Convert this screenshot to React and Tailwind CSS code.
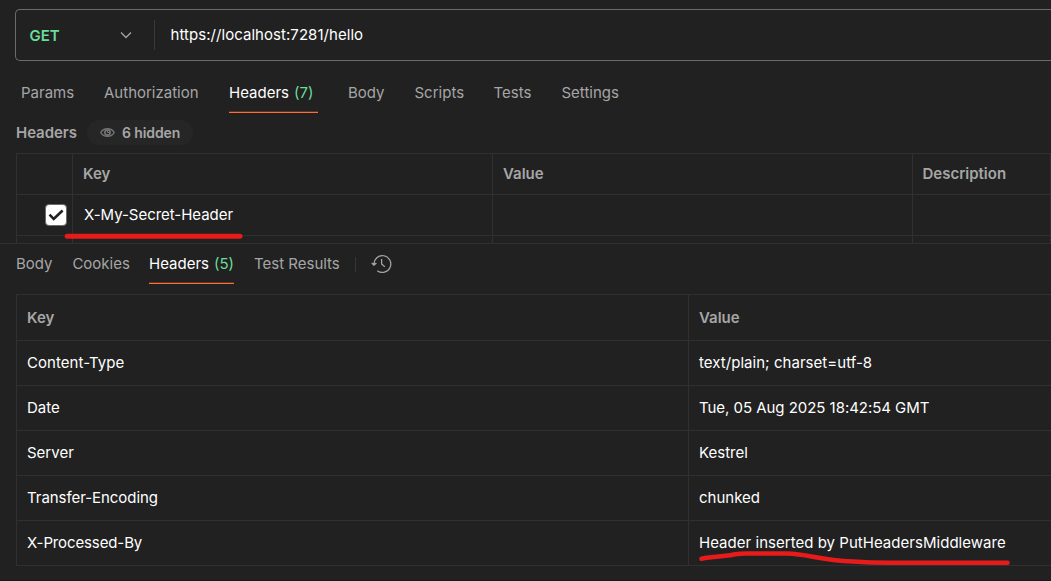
import React from "react";

const requestTabs = [
  { label: "Params", width: "w-[53px]" },
  { label: "Authorization", width: "w-[95px]" },
  { label: "Headers", count: 7, width: "w-[89px]" },
  { label: "Body", width: "w-[36.500px]" },
  { label: "Scripts", width: "w-[49px]" },
  { label: "Tests", width: "w-[38px]" },
  { label: "Settings", width: "w-[59px]" },
];

const responseTabs = [
  { label: "Body", width: "w-[36.400px]" },
  { label: "Cookies", width: "w-[56.600px]" },
  { label: "Headers", count: 5, width: "w-[85px]" },
  { label: "Test Results", width: "w-[87px]" },
];

const responseHeaders = [
  { name: "Content-Type", value: "text/plain; charset=utf-8", nameTracking: "tracking-[0.05px]", valueTracking: "tracking-[0.04px]" },
  { name: "Date", value: "Tue, 05 Aug 2025 18:42:54 GMT", nameTracking: "", valueTracking: "tracking-[-0.04px]" },
  { name: "Server", value: "Kestrel", nameTracking: "", valueTracking: "" },
  { name: "Transfer-Encoding", value: "chunked", nameTracking: "tracking-[-0.05px]", valueTracking: "" },
  { name: "X-Processed-By", value: "Header inserted by PutHeadersMiddleware", nameTracking: "tracking-[-0.12px]", valueTracking: "tracking-[0.03px]", marked: true },
];

function Tab({ label, count, width }) {
  const active = count !== undefined;
  return (
    <button
      className={`flex h-full shrink-0 whitespace-nowrap border-b ${width} ${
        active
          ? "border-[#ff6c37] text-white shadow-[inset_0_-1px_0_#583428]"
          : "border-transparent text-[#a6a6a6]"
      }`}
    >
      {label}
      {active && <span className="ml-[5px] text-[#6bdd9a]">({count})</span>}
    </button>
  );
}

function EyeIcon() {
  return (
    <svg className="h-[11px] w-[15px] shrink-0" viewBox="0 0 15 11" fill="none">
      <path d="M.8 5.500C2.200 2.800 4.600 1.700 7.500 1.700s5.300 1.100 6.700 3.800c-1.400 2.700-3.800 3.800-6.700 3.800S2.200 8.200.8 5.500Z" stroke="#737373" strokeWidth="1.400" />
      <circle cx="7.500" cy="5.500" r="2.600" stroke="#737373" strokeWidth="1.700" />
      <path d="M7.500 3.500v2H9.500" stroke="#737373" />
    </svg>
  );
}

function HistoryIcon() {
  return (
    <svg className="ml-[15px] h-5 w-[21px] shrink-0" viewBox="0 0 21 20" fill="none" stroke="#a6a6a6" strokeWidth="1.250">
      <path d="M3 10.500A8.400 8.400 0 1 1 6.300 16.700" />
      <path d="M.6 9.300H5.400L3 11.700Z" fill="#a6a6a6" strokeWidth=".8" strokeLinejoin="round" />
      <path d="M10.600 5V10L13.800 12.700" />
    </svg>
  );
}

export default function App() {
  return (
    <div className="flex h-[581px] w-full flex-col overflow-hidden border-b border-[#1a1a1a] bg-[#212121] font-['Inter',sans-serif] text-[15px] leading-5 text-white">
      <div className="ml-[15px] mt-[9px] flex h-[52px] shrink-0 items-center rounded-l-[5px] border border-r-0 border-[#6b6b6b]">
        <div className="flex w-[138px] items-center justify-between pl-[13.500px] pr-[22px]">
          <span className="pt-px font-semibold text-[#6bdd9a]">GET</span>
          <svg className="h-3 w-3" viewBox="0 0 12 12" fill="none" stroke="#a6a6a6" strokeWidth="1.250">
            <path d="m1 3.500 5 5 5-5" />
          </svg>
        </div>
        <div className="h-[30px] w-px bg-[#3a3a3a]" />
        <span className="ml-[15.500px] pb-px tracking-[0.05px]">https://localhost:7281/hello</span>
      </div>

      <nav className="ml-[21px] mt-[22px] flex h-[30px] shrink-0 gap-[30px]">
        {requestTabs.map((tab) => (
          <Tab key={tab.label} {...tab} />
        ))}
      </nav>

      <div className="ml-4 mt-[7px] flex h-[25px] shrink-0 items-center font-semibold text-[#a6a6a6]">
        <span className="w-[71px] tracking-[-0.05px]">Headers</span>
        <div className="flex h-[25px] w-[106px] items-center gap-[7px] rounded-full bg-[#262626] pl-[13px] text-sm">
          <EyeIcon />
          <span className="whitespace-nowrap tracking-[-0.1px]">6 hidden</span>
        </div>
      </div>

      <section className="relative mt-2 h-[91px] shrink-0 border-b border-[#303030] pl-4">
        <div className="grid h-[90px] grid-cols-[56px_420px_420px_1fr] grid-rows-[41px_41px_8px] border-l border-t border-[#303030] *:border-b *:border-r *:border-[#303030]">
          <div />
          <div className="px-[10px] py-[10px] font-semibold text-[#a6a6a6]">Key</div>
          <div className="px-[10px] py-[10px] font-semibold text-[#a6a6a6]">Value</div>
          <div className="px-[9.500px] py-[10px] font-semibold text-[#a6a6a6]">Description</div>
          <div className="flex items-center pl-[28px]">
            <span className="flex h-[22px] w-[22px] items-center justify-center rounded-[4px] border border-[#6b6b6b] bg-white">
              <svg className="h-4 w-4 shrink-0" viewBox="0 0 16 16" fill="none" stroke="#212121" strokeWidth="2.600">
                <path d="m1.500 7.700 4.200 4.200 8.900-8.400" />
              </svg>
            </span>
          </div>
          <div className="px-[11px] py-[10px] tracking-[-0.03px]">X-My-Secret-Header</div>
          <div />
          <div />
          <div className="border-b-0!" />
          <div className="border-b-0!" />
          <div className="border-b-0!" />
          <div className="border-b-0!" />
        </div>
        <svg className="absolute left-[64px] top-[80px] h-[7px] w-[180px]" viewBox="0 0 180 7" fill="none">
          <path d="M3.200 3.300H176" stroke="#e81b1b" strokeWidth="5" strokeLinecap="round" />
        </svg>
      </section>

      <div className="ml-4 mt-[10px] flex h-[30px] shrink-0">
        <nav className="flex h-full gap-5">
          {responseTabs.map((tab) => (
            <Tab key={tab.label} {...tab} />
          ))}
        </nav>
        <div className="ml-[14px] mt-[3px] h-[15px] w-px bg-[#363636]" />
        <HistoryIcon />
      </div>

      <section className="ml-4 mt-[10px] shrink-0 border-l border-t border-[#303030]">
        <div className="grid h-[46px] grid-cols-[672px_1fr] border-b border-[#303030] font-semibold text-[#a6a6a6]">
          <div className="flex items-center border-r border-[#303030] pl-[10px]">Key</div>
          <div className="flex items-center pl-[10px]">Value</div>
        </div>
        {responseHeaders.map(({ name, value, nameTracking, valueTracking, marked }) => (
          <div key={name} className="grid h-[45px] grid-cols-[672px_1fr] border-b border-[#303030]">
            <div className={`flex items-center border-r border-[#303030] pl-[10px] ${nameTracking}`}>{name}</div>
            <div className={`relative flex items-center pl-[10px] ${valueTracking}`}>
              {value}
              {marked && (
                <svg className="absolute left-[8px] top-[25px] h-[20px] w-[318px]" viewBox="0 0 318 20" fill="none">
                  <path d="M4.500 12.700C17 10 26 11 38 8.300Q43 7.500 49 7.500H90C112 8 121 14 156 15.500Q173 16.700 193 16.700H310.500" stroke="#e81b1b" strokeWidth="4.600" strokeLinecap="round" />
                </svg>
              )}
            </div>
          </div>
        ))}
      </section>
    </div>
  );
}
